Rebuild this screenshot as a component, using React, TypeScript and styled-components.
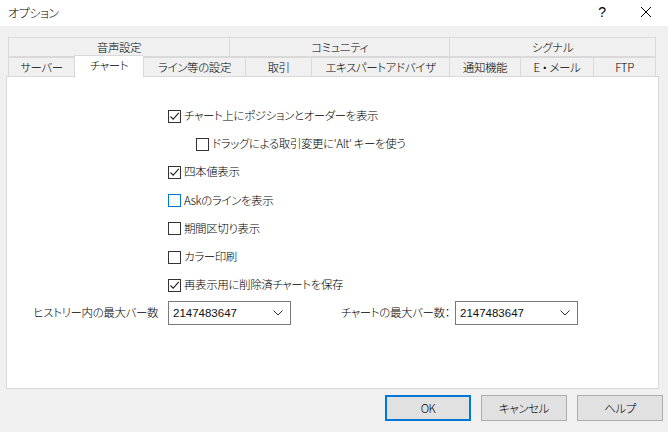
import React from "react";
import styled, { createGlobalStyle } from "styled-components";

const GlobalStyle = createGlobalStyle`
  html, body {
    margin: 0;
    padding: 0;
    background: #f0f0f0;
  }
  body {
    font-family: "Noto Sans CJK JP", "Noto Sans", sans-serif;
    font-size: 11.5px;
    font-weight: 300;
    letter-spacing: -0.4px;
    color: #000;
    font-feature-settings: "palt";
  }
`;

const topTabs = [
  { label: "音声設定", width: 221 },
  { label: "コミュニティ", width: 220 },
  { label: "シグナル", width: 207 },
];

const bottomTabs = [
  { label: "サーバー", width: 66 },
  { label: "チャート", width: 69, active: true },
  { label: "ライン等の設定", width: 102 },
  { label: "取引", width: 66 },
  { label: "エキスパートアドバイザ", width: 138 },
  { label: "通知機能", width: 71 },
  { label: "E ・ メール", width: 73 },
  { label: "FTP", width: 63 },
];

const options = [
  { label: "チャート上にポジションとオーダーを表示", checked: true },
  { label: "ドラッグによる取引変更に'Alt' キーを使う", indent: true },
  { label: "四本値表示", checked: true },
  { label: "Askのラインを表示", hover: true },
  { label: "期間区切り表示" },
  { label: "カラー印刷" },
  { label: "再表示用に削除済チャートを保存", checked: true },
];

export default function App() {
  return (
    <>
      <GlobalStyle />
      <Window>
        <TitleBar>
          <Title>オプション</Title>
          <TitleButtons>
            <TitleButton>?</TitleButton>
            <TitleButton>
              <svg width="12" height="12" viewBox="0 0 12 12">
                <path d="M1 1 L11 11 M11 1 L1 11" stroke="#000" strokeWidth="1" />
              </svg>
            </TitleButton>
          </TitleButtons>
        </TitleBar>
        <Body>
          <TabRow $top>
            {topTabs.map((t) => (
              <Tab key={t.label} $width={t.width}>
                {t.label}
              </Tab>
            ))}
          </TabRow>
          <TabRow>
            {bottomTabs.map((t) => (
              <Tab key={t.label} $width={t.width} $active={t.active}>
                {t.label}
              </Tab>
            ))}
          </TabRow>
          <Panel>
            <OptionList>
              {options.map((o) => (
                <OptionRow key={o.label} $indent={o.indent}>
                  <CheckBox $hover={o.hover}>
                    {o.checked && (
                      <svg width="11" height="11" viewBox="0 0 11 11">
                        <path d="M1.5 5.5 L4.2 8.2 L9.8 1.8" fill="none" stroke="#222" strokeWidth="1.1" />
                      </svg>
                    )}
                  </CheckBox>
                  <span>{o.label}</span>
                </OptionRow>
              ))}
            </OptionList>
            <ComboRow>
              <ComboField $labelWidth={140} $gap={10}>
                <ComboLabel>ヒストリー内の最大バー数</ComboLabel>
                <Combo>
                  <span>2147483647</span>
                  <Chevron />
                </Combo>
              </ComboField>
              <ComboField $labelWidth={150} $gap={5}>
                <ComboLabel>チャートの最大バー数：</ComboLabel>
                <Combo>
                  <span>2147483647</span>
                  <Chevron />
                </Combo>
              </ComboField>
            </ComboRow>
          </Panel>
          <ButtonRow>
            <Button $primary>OK</Button>
            <Button>キャンセル</Button>
            <Button>ヘルプ</Button>
          </ButtonRow>
        </Body>
      </Window>
    </>
  );
}

const Chevron = () => (
  <svg width="10" height="6" viewBox="0 0 10 6">
    <path d="M0.5 0.5 L5 5 L9.5 0.5" fill="none" stroke="#333" strokeWidth="1" />
  </svg>
);

//----------style----------
const Window = styled.div`
  width: 668px;
  height: 432px;
  display: flex;
  flex-direction: column;
  background: #f0f0f0;
  overflow: hidden;
`;

const TitleBar = styled.div`
  height: 26px;
  background: #fff;
  display: flex;
  align-items: center;
  justify-content: space-between;
  padding-left: 8px;
`;

const Title = styled.div`
  font-size: 12px;
  margin-top: -2px;
`;

const TitleButtons = styled.div`
  display: flex;
  height: 100%;
`;

const TitleButton = styled.div`
  width: 44px;
  display: flex;
  align-items: center;
  justify-content: center;
  font-family: "Liberation Sans", sans-serif;
  font-size: 14px;
  margin-top: -3px;
`;

const Body = styled.div`
  flex: 1;
  display: flex;
  flex-direction: column;
  padding: 11px 9px 0 6px;
`;

const TabRow = styled.div<{ $top?: boolean }>`
  display: flex;
  height: 20px;
  padding-left: 2px;
  align-items: flex-end;
  position: relative;
  z-index: ${(p) => (p.$top ? 0 : 1)};
`;

const Tab = styled.div<{ $width: number; $active?: boolean }>`
  box-sizing: border-box;
  width: ${(p) => p.$width}px;
  height: ${(p) => (p.$active ? 23 : 20)}px;
  margin-bottom: ${(p) => (p.$active ? -1 : 0)}px;
  display: flex;
  align-items: center;
  justify-content: center;
  padding-bottom: ${(p) => (p.$active ? 5 : 1)}px;
  border: 1px solid #d9d9d9;
  border-right: none;
  border-bottom: ${(p) => (p.$active ? "none" : "1px solid #d9d9d9")};
  background: ${(p) => (p.$active ? "#fff" : "#f0f0f0")};
  white-space: pre;
  &:last-child {
    border-right: 1px solid #d9d9d9;
  }
`;

const Panel = styled.div`
  box-sizing: border-box;
  height: 313px;
  margin-top: -1px;
  background: #fff;
  border: 1px solid #d9d9d9;
  display: flex;
  flex-direction: column;
  padding-top: 25px;
`;

const OptionList = styled.div`
  display: flex;
  flex-direction: column;
  padding-left: 161px;
`;

const OptionRow = styled.label<{ $indent?: boolean }>`
  height: 28.2px;
  display: flex;
  align-items: center;
  gap: 3px;
  padding-left: ${(p) => (p.$indent ? 28 : 0)}px;
  & > span:last-child {
    margin-top: -2px;
  }
`;

const CheckBox = styled.span<{ $hover?: boolean }>`
  box-sizing: border-box;
  width: 13px;
  height: 13px;
  border: 1px solid ${(p) => (p.$hover ? "#0078d7" : "#333")};
  background: #fff;
  display: flex;
  align-items: center;
  justify-content: center;
`;

const ComboRow = styled.div`
  display: flex;
  padding-left: 11px;
  margin-top: 2px;
  gap: 9px;
`;

const ComboField = styled.div<{ $labelWidth: number; $gap: number }>`
  display: flex;
  align-items: center;
  gap: ${(p) => p.$gap}px;
  & > span:first-child {
    width: ${(p) => p.$labelWidth}px;
  }
`;

const ComboLabel = styled.span`
  white-space: nowrap;
  text-align: right;
  margin-top: -2px;
`;

const Combo = styled.div`
  box-sizing: border-box;
  width: 123px;
  height: 24px;
  border: 1px solid #7a7a7a;
  background: #fff;
  display: flex;
  align-items: center;
  justify-content: space-between;
  padding: 0 7px 0 4px;
  font-family: "Liberation Sans", sans-serif;
  font-weight: 400;
  letter-spacing: 0;
  font-size: 11.5px;
  color: #111;
`;

const ButtonRow = styled.div`
  display: flex;
  justify-content: flex-end;
  gap: 10px;
  margin-top: 6px;
  margin-right: -4px;
`;

const Button = styled.button<{ $primary?: boolean }>`
  box-sizing: border-box;
  width: 86px;
  height: 26px;
  background: #e1e1e1;
  border: ${(p) => (p.$primary ? "2px solid #0078d7" : "1px solid #adadad")};
  font-family: "Noto Sans CJK JP", "Noto Sans", sans-serif;
  font-feature-settings: "palt";
  font-weight: 300;
  letter-spacing: -0.4px;
  font-size: 11.5px;
  color: #000;
  padding: 0;
`;
